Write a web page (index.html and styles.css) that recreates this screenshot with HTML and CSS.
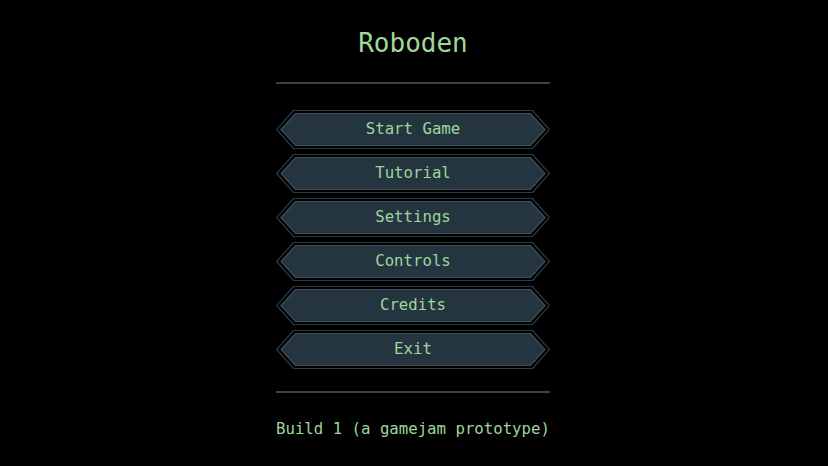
FILE: index.html
```html
<!DOCTYPE html>
<html lang="en">
<head>
<meta charset="utf-8">
<title>Roboden</title>
<link rel="stylesheet" href="styles.css">
</head>
<body>
<main class="menu">
  <h1 class="title">Roboden</h1>
  <div class="sep sep-top"></div>
  <nav class="buttons">
    <button class="menu-btn">Start Game</button>
    <button class="menu-btn">Tutorial</button>
    <button class="menu-btn">Settings</button>
    <button class="menu-btn">Controls</button>
    <button class="menu-btn">Credits</button>
    <button class="menu-btn">Exit</button>
  </nav>
  <div class="sep sep-bottom"></div>
  <p class="build">Build 1 (a gamejam prototype)</p>
</main>
</body>
</html>
```

FILE: styles.css
```css
html, body {
  margin: 0;
  padding: 0;
  background: #000;
  height: 100%;
}

body {
  font-family: "DejaVu Sans Mono", "Liberation Mono", monospace;
  color: #9fd59b;
}

.menu {
  width: 274px;
  margin: 0 0 0 calc(50% - 138px);
  padding-top: 28px;
  display: flex;
  flex-direction: column;
}

.title {
  margin: 0;
  font-size: 26px;
  font-weight: normal;
  line-height: 30px;
  text-align: center;
  color: #a0d79c;
}

.sep {
  height: 2px;
  background: #36434c;
}

.sep-top {
  margin-top: 24px;
}

.buttons {
  display: flex;
  flex-direction: column;
  gap: 5px;
  margin-top: 26px;
}

.menu-btn {
  appearance: none;
  border: 0;
  margin: 0;
  padding: 0 0 2px 0;
  width: 274px;
  height: 39px;
  font-family: inherit;
  font-size: 15.7px;
  line-height: 37px;
  color: #9fd59b;
  text-align: center;
  background: transparent url("data:image/svg+xml,%3Csvg xmlns='http://www.w3.org/2000/svg' width='274' height='39' viewBox='0 0 274 39'%3E%3Cpolygon points='17.5,0.5 256.5,0.5 273.5,19.5 256.5,38.5 17.5,38.5 0.5,19.5' fill='none' stroke='%232e3b45' stroke-width='1.2'/%3E%3Cpolygon points='19.5,3.5 254.5,3.5 269,19.5 254.5,35.5 19.5,35.5 5,19.5' fill='%23253540' stroke='%233d4f5a' stroke-width='1.2'/%3E%3C/svg%3E") no-repeat 0 0 / 274px 39px;
  cursor: pointer;
}

.sep-bottom {
  margin-top: 22px;
}

.build {
  margin: 26px 0 0 0;
  font-size: 15.7px;
  line-height: 20px;
  white-space: nowrap;
  color: #9fd59b;
}
```
